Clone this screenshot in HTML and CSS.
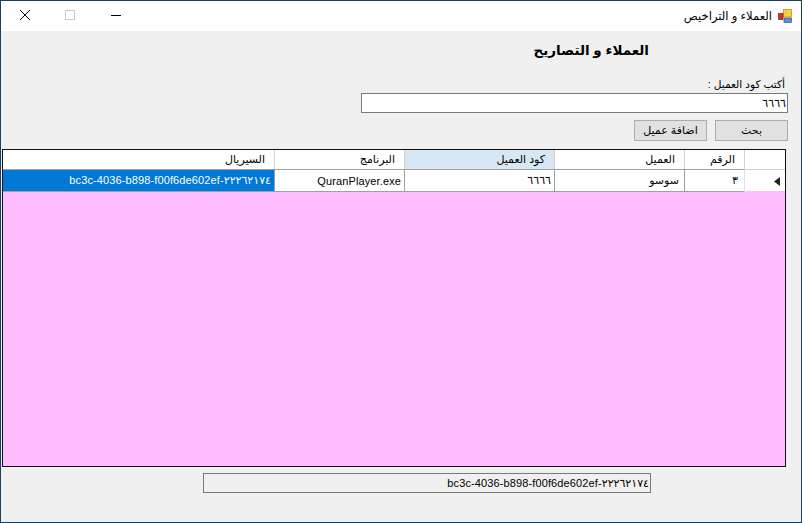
FILE: index.html
```html
<!DOCTYPE html>
<html lang="ar">
<head>
<meta charset="utf-8">
<title>العملاء و التراخيص</title>
<link rel="stylesheet" href="styles.css">
</head>
<body>
<div class="window">
  <header class="titlebar">
    <div class="controls">
      <svg class="ctl" width="46" height="30" viewBox="0 0 46 30"><path d="M19 9l10 10M29 9l-10 10" stroke="#000" stroke-width="1" fill="none"/></svg>
      <svg class="ctl" width="46" height="30" viewBox="0 0 46 30"><rect x="18.500" y="9.500" width="9" height="9" fill="none" stroke="#ccc"/></svg>
      <svg class="ctl" width="46" height="30" viewBox="0 0 46 30"><path d="M18 14.500h10" stroke="#000" fill="none"/></svg>
    </div>
    <div class="apptitle">
      <svg width="14" height="14" viewBox="0 0 14 14"><rect x="5.500" y="0.500" width="8" height="7.500" fill="#f8d040" stroke="#b08a20" stroke-width=".7"/><rect x="0.500" y="4.500" width="4.500" height="6" fill="#d83020" stroke="#802018" stroke-width=".7"/><rect x="6" y="9" width="7.500" height="4.500" fill="#5a90d8" stroke="#305a98" stroke-width=".7"/></svg>
      <span>العملاء و التراخيص</span>
    </div>
  </header>
  <main class="content">
    <h1 class="heading">العملاء و التصاريح</h1>
    <label class="codelabel">أكتب كود العميل :</label>
    <div class="codebox">٦٦٦٦</div>
    <div class="actions">
      <button class="btn btn-search">بحث</button>
      <button class="btn btn-add">اضافة عميل</button>
    </div>
    <div class="grid">
      <div class="row head">
        <div class="cell c-ind"></div>
        <div class="cell c-num">الرقم</div>
        <div class="cell c-client">العميل</div>
        <div class="cell c-code sorted">كود العميل</div>
        <div class="cell c-prog">البرنامج</div>
        <div class="cell c-serial">السيريال</div>
      </div>
      <div class="row body">
        <div class="cell c-ind"><svg class="rowmark" width="6" height="9" viewBox="0 0 6 9"><path d="M6 0v9L0 4.500z" fill="#222"/></svg></div>
        <div class="cell c-num">٣</div>
        <div class="cell c-client">سوسو</div>
        <div class="cell c-code">٦٦٦٦</div>
        <div class="cell c-prog"><span class="latin">QuranPlayer.exe</span></div>
        <div class="cell c-serial selected"><bdi class="latin" dir="ltr">bc3c-4036-b898-f00f6de602ef-٢٢٢٦٢١٧٤</bdi></div>
      </div>
    </div>
    <div class="serialbox"><bdi class="latin" dir="ltr">bc3c-4036-b898-f00f6de602ef-٢٢٢٦٢١٧٤</bdi></div>
  </main>
</div>
</body>
</html>
```
FILE: styles.css
```css
* { box-sizing: border-box; }
html, body { margin: 0; padding: 0; }
body {
  width: 802px;
  height: 523px;
  overflow: hidden;
  font-family: "Liberation Sans", "DejaVu Sans", sans-serif;
  font-size: 11px;
  color: #000;
}
.latin { letter-spacing: 0.120px; }
.window {
  width: 802px;
  height: 523px;
  display: flex;
  flex-direction: column;
  background: #f0f0f0;
  border: 1px solid #1b3f5e;
}
.titlebar {
  height: 30px;
  flex: none;
  background: #fff;
  display: flex;
  justify-content: space-between;
  align-items: center;
}
.controls { display: flex; }
.ctl { display: block; }
.apptitle {
  display: flex;
  align-items: center;
  gap: 6px;
  padding-right: 9px;
  direction: rtl;
  font-size: 11.600px;
}
.content {
  flex: 1;
  display: flex;
  flex-direction: column;
  direction: rtl;
}
.heading {
  margin: 10px 152px 0 0;
  height: 20px;
  line-height: 20px;
  font-size: 13.500px;
  font-weight: bold;
}
.codelabel {
  margin: 15px 16px 0 0;
  height: 16px;
  line-height: 16px;
  font-size: 10.600px;
}
.codebox {
  margin: 1px 13px 0 0;
  width: 427px;
  height: 20px;
  line-height: 18px;
  background: #fff;
  border: 1px solid #7a7a7a;
  padding: 0 1px;
}
.actions {
  display: flex;
  gap: 8px;
  margin: 7px 13px 0 0;
}
.btn {
  width: 73px;
  height: 21px;
  padding: 0;
  background: #e1e1e1;
  border: 1px solid #adadad;
  font: inherit;
  color: #000;
}
.grid {
  margin: 8px 15px 0 0;
  width: 784px;
  height: 318px;
  background: #ffbdff;
  border: 1px solid #101010;
  display: flex;
  flex-direction: column;
}
.row { display: flex; flex: none; }
.row.head { height: 19px; }
.row.body { height: 23px; }
.cell {
  height: 100%;
  padding: 0 9px 0 4px;
  display: flex;
  align-items: center;
  background: #fff;
  border-left: 1px solid #d0d0d0;
  white-space: nowrap;
  overflow: hidden;
}
.row.body .cell {
  border-top: 1px solid #a0a0a0;
  border-bottom: 1px solid #a0a0a0;
  border-left: 1px solid #a0a0a0;
  padding-right: 3px;
}
.c-ind { width: 41px; justify-content: center; }
.row.body .c-ind {
  border-left: 1px solid #e0e0e0;
  border-top-color: #d0d0d0;
  border-bottom: 0;
  height: 22px;
  padding: 0 5px 0 0;
  justify-content: flex-start;
}
.rowmark { margin-top: 2px; }
.c-num { width: 60px; }
.row.body .c-num { padding-right: 6px; }
.c-client { width: 130px; }
.row.body .c-client { padding-right: 5px; }
.c-code { width: 150px; }
.c-prog { width: 130px; }
.c-serial { width: 271px; border-left: 0; }
.row.body .c-serial { border-left: 0; }
.sorted { background: #d6e8f6; }
.row.body .selected { background: #0078d7; color: #fff; }
.serialbox {
  margin: 6px 150px 0 0;
  width: 448px;
  height: 20px;
  line-height: 18px;
  background: #f0f0f0;
  border: 1px solid #7a7a7a;
  padding: 0 1px;
}
```
